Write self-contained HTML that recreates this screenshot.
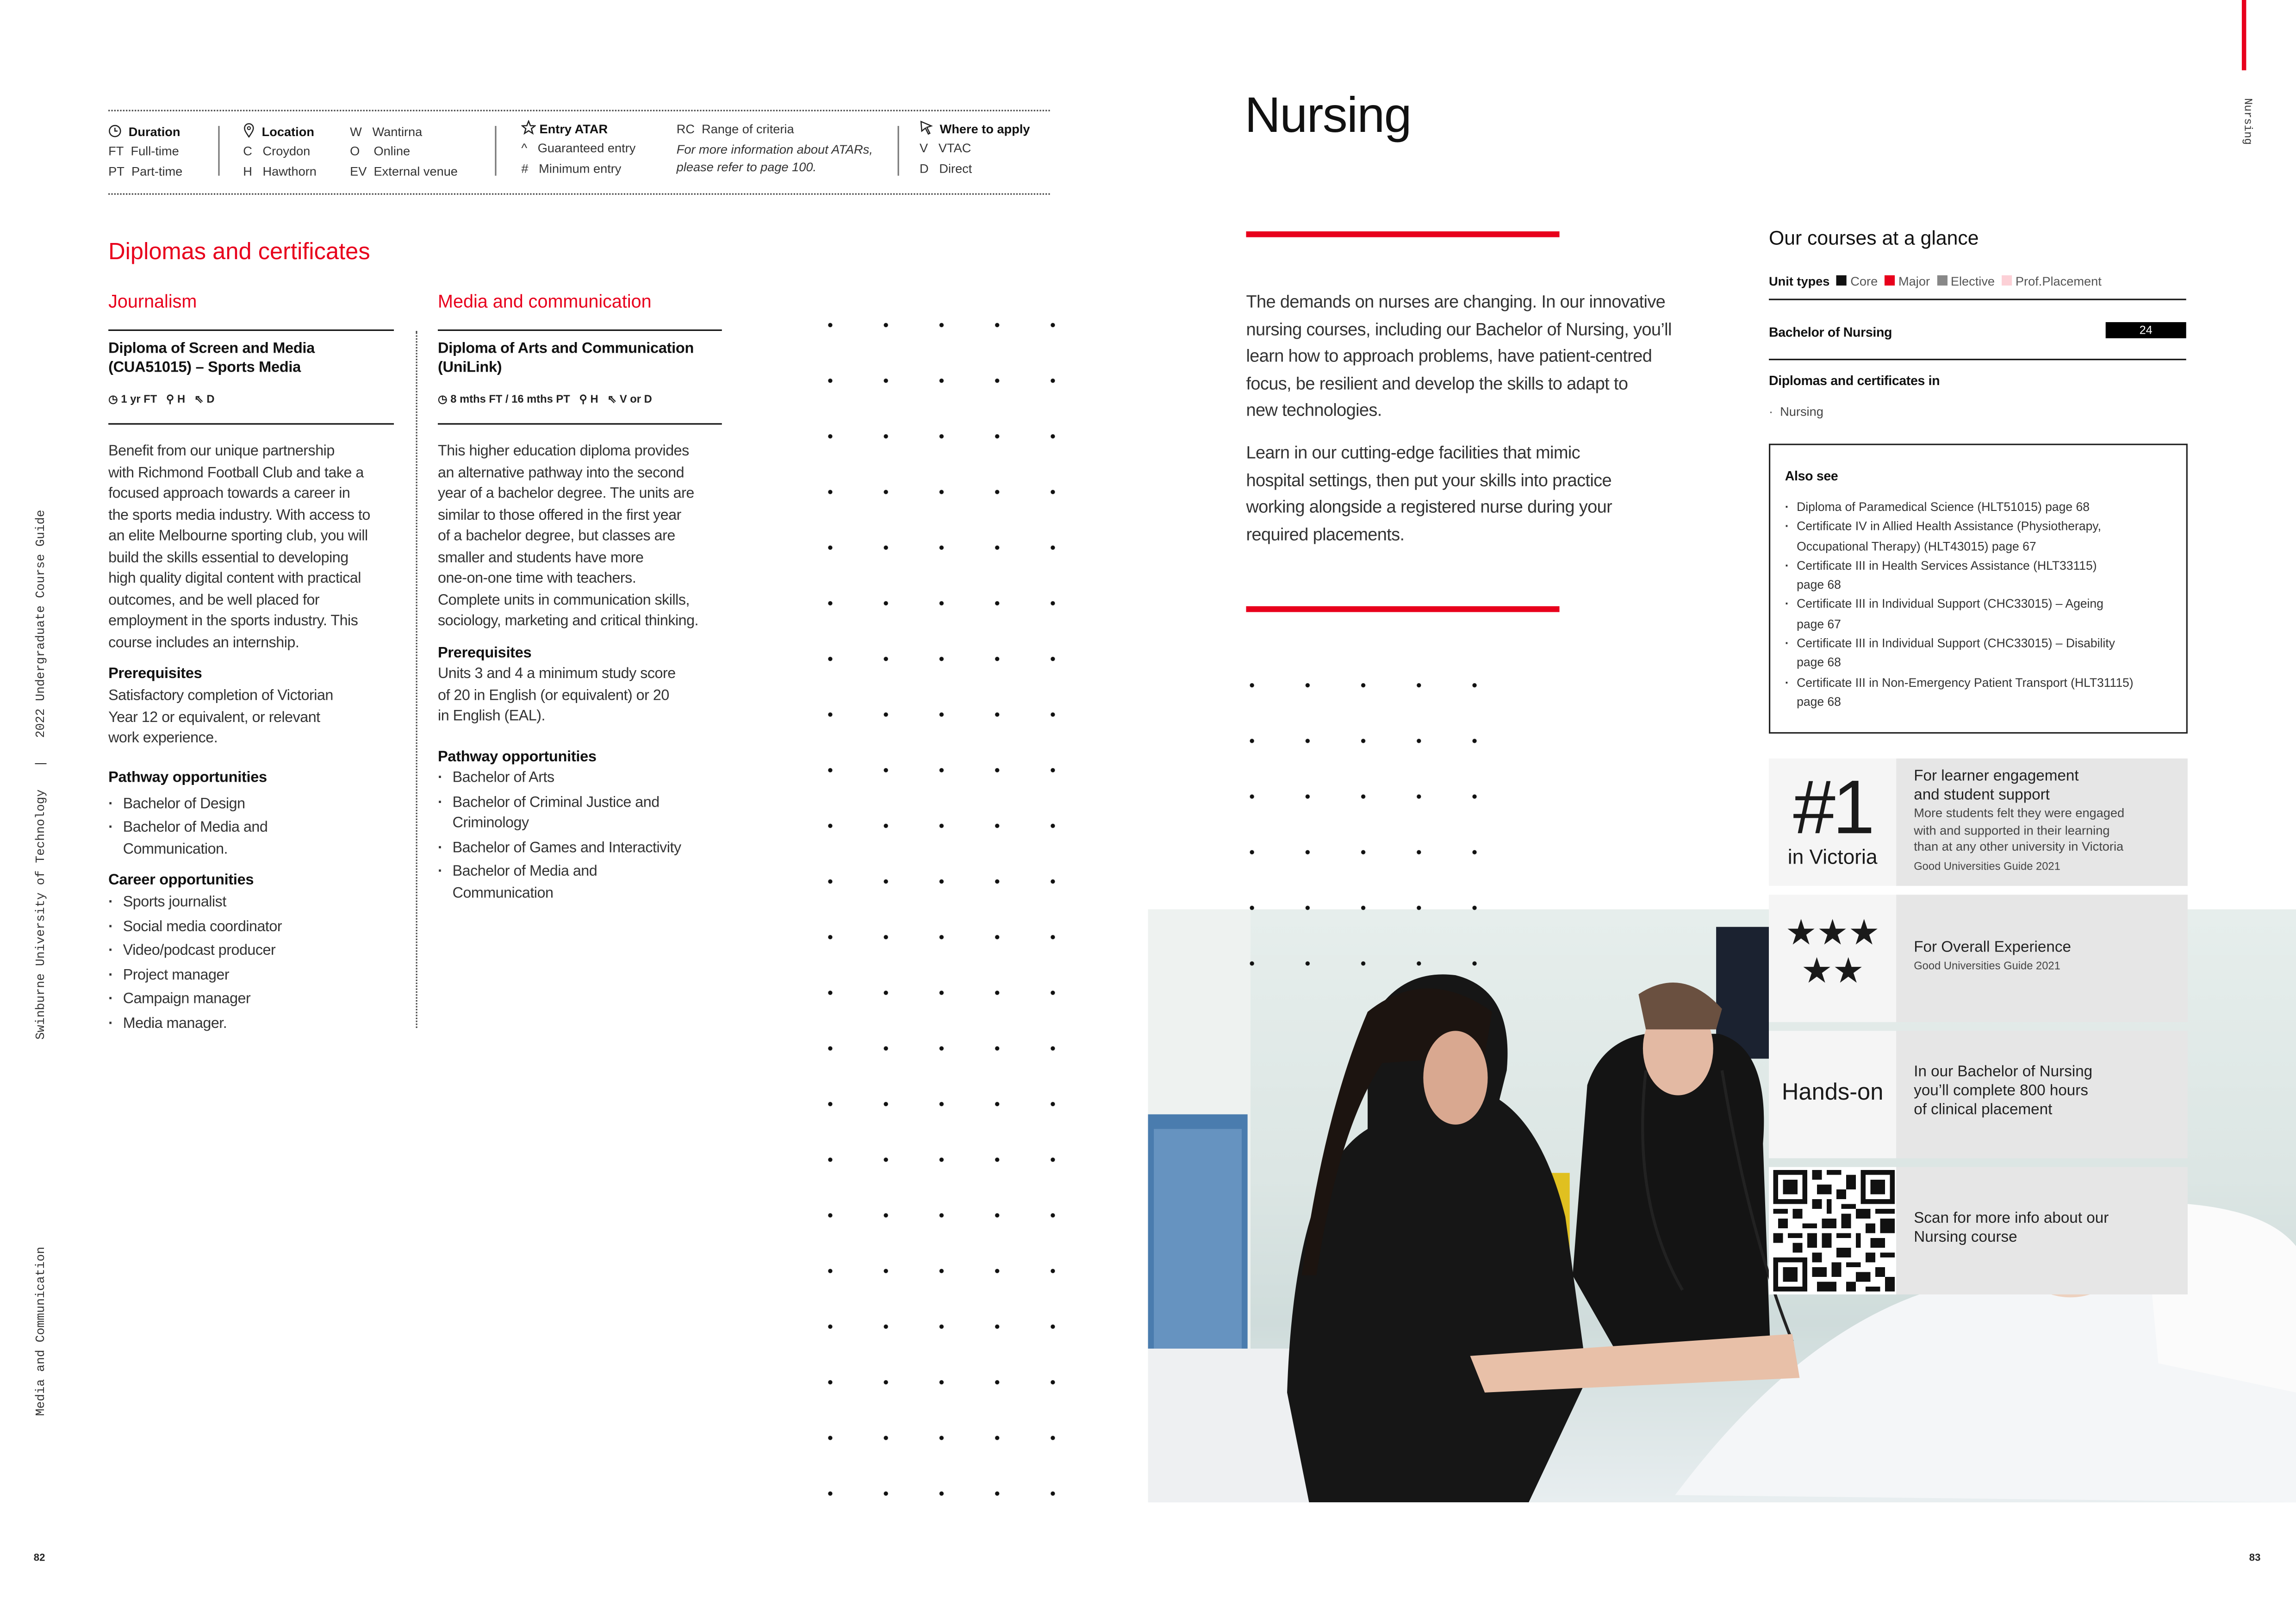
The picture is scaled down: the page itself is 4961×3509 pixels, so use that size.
<!DOCTYPE html>
<html><head><meta charset="utf-8"><style>
html,body{margin:0;padding:0;background:#fff;}
body{width:4961px;height:3508px;overflow:hidden;position:relative;}
#p{position:absolute;left:0;top:0;width:1568px;height:1109px;transform:scale(3.1639);transform-origin:0 0;font-family:"Liberation Sans",sans-serif;color:#222;}
.a{position:absolute;white-space:nowrap;}
.red{color:#e8001c;}
.t{font-size:10.2px;line-height:14.5px;color:#333;letter-spacing:-0.15px;}
.h{font-weight:bold;font-size:10.3px;color:#111;letter-spacing:-0.1px;}
.leg{font-size:8.6px;line-height:13.3px;color:#333;}
.leg b{color:#111;}
ul{margin:0;padding:0;list-style:none;}
li{position:relative;padding-left:10px;}
li:before{content:"·";position:absolute;left:0;font-weight:bold;}
.dl{position:absolute;border-top:1px dotted #444;}
.sl{position:absolute;height:1.3px;background:#111;}
.box{position:absolute;}
</style></head><body><div id="p">

<div class="dl" style="left:74px;top:75px;width:643px"></div>
<div class="dl" style="left:74px;top:132px;width:643px"></div>
<div class="a leg" style="left:74px;top:84px">
<svg width="9" height="9" viewBox="0 0 10 10" style="vertical-align:-1px"><circle cx="5" cy="5" r="4.2" fill="none" stroke="#222" stroke-width="0.9"/><path d="M5 2.5V5H7" fill="none" stroke="#222" stroke-width="0.9"/></svg>&nbsp;&nbsp;<b>Duration</b><br>FT&nbsp;&nbsp;Full-time<br>PT&nbsp;&nbsp;Part-time</div>
<div class="box" style="left:149px;top:86px;width:1px;height:34px;background:#777"></div>
<div class="a leg" style="left:166px;top:84px">
<svg width="8" height="10" viewBox="0 0 8 10" style="vertical-align:-1px"><path d="M4 9.5C2 6.5 1 5 1 3.5A3 3 0 0 1 7 3.5C7 5 6 6.5 4 9.5Z" fill="none" stroke="#222" stroke-width="0.8"/><circle cx="4" cy="3.5" r="1" fill="none" stroke="#222" stroke-width="0.7"/></svg>&nbsp;&nbsp;<b>Location</b><br>C&nbsp;&nbsp;&nbsp;Croydon<br>H&nbsp;&nbsp;&nbsp;Hawthorn</div>
<div class="a leg" style="left:239px;top:84px">W&nbsp;&nbsp;&nbsp;Wantirna<br>O&nbsp;&nbsp;&nbsp;&nbsp;Online<br>EV&nbsp;&nbsp;External venue</div>
<div class="box" style="left:338px;top:86px;width:1px;height:34px;background:#777"></div>
<div class="a leg" style="left:356px;top:82px">
<svg width="10" height="10" viewBox="0 0 10 10" style="vertical-align:-1px"><path d="M5 .7 6.2 3.8 9.4 3.9 6.9 5.9 7.8 9.1 5 7.3 2.2 9.1 3.1 5.9.6 3.9 3.8 3.8Z" fill="none" stroke="#222" stroke-width="0.8"/></svg>&nbsp;<b>Entry ATAR</b><br>^&nbsp;&nbsp;&nbsp;Guaranteed entry<br>#&nbsp;&nbsp;&nbsp;Minimum entry</div>
<div class="a leg" style="left:462px;top:82px;line-height:12px">RC&nbsp;&nbsp;Range of criteria<br><i style="display:inline-block;margin-top:2px">For more information about ATARs,<br>please refer to page 100.</i></div>
<div class="box" style="left:613px;top:86px;width:1px;height:34px;background:#777"></div>
<div class="a leg" style="left:628px;top:82px">
<svg width="9" height="10" viewBox="0 0 9 10" style="vertical-align:-1px"><path d="M1 1 8 4 5 5 7 9 6 9.5 4 5.5 1.5 7.5Z" fill="none" stroke="#222" stroke-width="0.8"/></svg>&nbsp;&nbsp;<b>Where to apply</b><br>V&nbsp;&nbsp;&nbsp;VTAC<br>D&nbsp;&nbsp;&nbsp;Direct</div>

<div class="a red" style="left:74px;top:164px;font-size:16px">Diplomas and certificates</div>
<div class="a red" style="left:74px;top:199px;font-size:12.5px">Journalism</div>
<div class="a red" style="left:299px;top:199px;font-size:12.5px">Media and communication</div>
<div class="sl" style="left:74px;top:225px;width:195px"></div>
<div class="sl" style="left:299px;top:225px;width:194px"></div>
<div class="sl" style="left:74px;top:289px;width:195px"></div>
<div class="sl" style="left:299px;top:289px;width:194px"></div>
<div class="box" style="left:284px;top:226px;height:476px;border-left:1px dotted #444"></div>

<div class="a h" style="left:74px;top:232px;line-height:13px">Diploma of Screen and Media<br>(CUA51015) – Sports Media</div>
<div class="a h" style="left:299px;top:232px;line-height:13px">Diploma of Arts and Communication<br>(UniLink)</div>
<div class="a" style="left:74px;top:268px;font-size:7.5px;font-weight:bold">◷ 1 yr FT &nbsp;&nbsp;⚲ H &nbsp;&nbsp;⇖ D</div>
<div class="a" style="left:299px;top:268px;font-size:7.5px;font-weight:bold">◷ 8 mths FT / 16 mths PT &nbsp;&nbsp;⚲ H &nbsp;&nbsp;⇖ V or D</div>

<div class="a t" style="left:74px;top:302px">Benefit from our unique partnership<br>with Richmond Football Club and take a<br>focused approach towards a career in<br>the sports media industry. With access to<br>an elite Melbourne sporting club, you will<br>build the skills essential to developing<br>high quality digital content with practical<br>outcomes, and be well placed for<br>employment in the sports industry. This<br>course includes an internship.</div>
<div class="a h" style="left:74px;top:455px">Prerequisites</div>
<div class="a t" style="left:74px;top:469px">Satisfactory completion of Victorian<br>Year 12 or equivalent, or relevant<br>work experience.</div>
<div class="a h" style="left:74px;top:526px">Pathway opportunities</div>
<ul class="a t" style="left:74px;top:542px;line-height:15.5px"><li>Bachelor of Design</li><li>Bachelor of Media and<br>Communication.</li></ul>
<div class="a h" style="left:74px;top:596px">Career opportunities</div>
<ul class="a t" style="left:74px;top:609px;line-height:16.5px"><li>Sports journalist</li><li>Social media coordinator</li><li>Video/podcast producer</li><li>Project manager</li><li>Campaign manager</li><li>Media manager.</li></ul>

<div class="a t" style="left:299px;top:302px">This higher education diploma provides<br>an alternative pathway into the second<br>year of a bachelor degree. The units are<br>similar to those offered in the first year<br>of a bachelor degree, but classes are<br>smaller and students have more<br>one-on-one time with teachers.<br>Complete units in communication skills,<br>sociology, marketing and critical thinking.</div>
<div class="a h" style="left:299px;top:441px">Prerequisites</div>
<div class="a t" style="left:299px;top:454px">Units 3 and 4 a minimum study score<br>of 20 in English (or equivalent) or 20<br>in English (EAL).</div>
<div class="a h" style="left:299px;top:512px">Pathway opportunities</div>
<ul class="a t" style="left:299px;top:525px;line-height:14.5px"><li>Bachelor of Arts</li><li style="margin-top:2px">Bachelor of Criminal Justice and<br>Criminology</li><li style="margin-top:2px">Bachelor of Games and Interactivity</li><li style="margin-top:2px">Bachelor of Media and<br>Communication</li></ul>

<div class="box" style="left:548px;top:203px;width:190px;height:836px;background-image:radial-gradient(circle,#111 1.3px,transparent 1.6px);background-size:38px 38px"></div>

<div class="a" style="left:23px;top:710px;transform:rotate(-90deg);transform-origin:0 0;font-family:'Liberation Mono',monospace;font-size:8.4px;color:#333">Swinburne University of Technology &nbsp;&nbsp;| &nbsp;&nbsp;2022 Undergraduate Course Guide</div>
<div class="a" style="left:23px;top:967px;transform:rotate(-90deg);transform-origin:0 0;font-family:'Liberation Mono',monospace;font-size:8.4px;color:#333">Media and Communication</div>
<div class="a" style="left:23px;top:1061px;font-size:7px;font-weight:bold">82</div>
<div class="a" style="left:1536px;top:1061px;font-size:7px;font-weight:bold">83</div>

<div class="box" style="left:1531px;top:0;width:3px;height:48px;background:#e8001c"></div>
<div class="a" style="left:1538px;top:67px;transform:rotate(90deg);transform-origin:0 0;font-family:'Liberation Mono',monospace;font-size:7.6px;color:#333">Nursing</div>
<div class="a" style="left:850px;top:60px;font-size:34px;color:#111;letter-spacing:-0.5px">Nursing</div>
<div class="box" style="left:851px;top:158px;width:214px;height:4px;background:#e8001c"></div>
<div class="box" style="left:851px;top:414px;width:214px;height:4px;background:#e8001c"></div>
<div class="a" style="left:851px;top:197px;font-size:12px;line-height:18.6px;color:#333;letter-spacing:-0.2px">The demands on nurses are changing. In our innovative<br>nursing courses, including our Bachelor of Nursing, you’ll<br>learn how to approach problems, have patient-centred<br>focus, be resilient and develop the skills to adapt to<br>new technologies.</div>
<div class="a" style="left:851px;top:300px;font-size:12px;line-height:18.6px;color:#333;letter-spacing:-0.2px">Learn in our cutting-edge facilities that mimic<br>hospital settings, then put your skills into practice<br>working alongside a registered nurse during your<br>required placements.</div>

<div class="a" style="left:1208px;top:155px;font-size:13.5px;color:#111">Our courses at a glance</div>
<div class="a" style="left:1208px;top:187px;font-size:8.6px;color:#555"><b style="color:#111">Unit types</b> &nbsp;<span style="display:inline-block;width:7px;height:7px;background:#111"></span> Core &nbsp;<span style="display:inline-block;width:7px;height:7px;background:#e8001c"></span> Major &nbsp;<span style="display:inline-block;width:7px;height:7px;background:#888"></span> Elective &nbsp;<span style="display:inline-block;width:7px;height:7px;background:#fcd0d6"></span> Prof.Placement</div>
<div class="sl" style="left:1208px;top:204px;width:285px"></div>
<div class="a h" style="left:1208px;top:222px;font-size:9px">Bachelor of Nursing</div>
<div class="box" style="left:1438px;top:220px;width:55px;height:11px;background:#000;color:#fff;font-size:8px;text-align:center;line-height:11px">24</div>
<div class="sl" style="left:1208px;top:245px;width:285px"></div>
<div class="a h" style="left:1208px;top:255px;font-size:9px">Diplomas and certificates in</div>
<div class="a" style="left:1208px;top:276px;font-size:8.6px;color:#444">·&nbsp; Nursing</div>
<div class="box" style="left:1208px;top:303px;width:284px;height:196px;border:1px solid #222"></div>
<div class="a h" style="left:1219px;top:320px;font-size:9px">Also see</div>
<ul class="a" style="left:1219px;top:340px;font-size:8.4px;line-height:13.3px;color:#333"><li style="padding-left:8px">Diploma of Paramedical Science (HLT51015) page 68</li><li style="padding-left:8px">Certificate IV in Allied Health Assistance (Physiotherapy,<br>Occupational Therapy) (HLT43015) page 67</li><li style="padding-left:8px">Certificate III in Health Services Assistance (HLT33115)<br>page 68</li><li style="padding-left:8px">Certificate III in Individual Support (CHC33015) – Ageing<br>page 67</li><li style="padding-left:8px">Certificate III in Individual Support (CHC33015) – Disability<br>page 68</li><li style="padding-left:8px">Certificate III in Non-Emergency Patient Transport (HLT31115)<br>page 68</li></ul>

<div class="box" style="left:784px;top:621px;width:784px;height:405px;overflow:hidden;background:linear-gradient(180deg,#e6eeec 0%,#dce6e4 45%,#cfdcdb 70%,#e8eef0 100%)">
<svg width="784" height="405" viewBox="0 0 784 405">
<rect x="0" y="0" width="70" height="405" fill="#eef2f0"/>
<rect x="0" y="140" width="68" height="170" fill="#4a7cae"/>
<rect x="4" y="150" width="60" height="150" fill="#7aa4cc" opacity="0.6"/>
<rect x="388" y="12" width="36" height="90" fill="#1b2230"/>
<rect x="248" y="180" width="40" height="60" fill="#e0c020"/>
<rect x="0" y="300" width="200" height="105" fill="#eef0f2"/>
<path d="M150 80 Q170 40 210 45 Q250 55 245 110 L240 130 Q270 150 285 210 L300 320 L260 405 L110 405 L95 330 Q100 180 150 150 Z" fill="#161616"/>
<path d="M150 70 Q190 38 235 70 L230 100 L160 105 Q130 150 115 250 L105 250 Q120 140 150 70Z" fill="#1c1410"/>
<ellipse cx="210" cy="115" rx="22" ry="32" fill="#d9a890"/>
<path d="M300 120 Q310 90 340 85 L390 85 Q425 95 420 160 L425 300 L330 320 L290 250 Z" fill="#141414"/>
<ellipse cx="362" cy="95" rx="24" ry="32" fill="#e3b9a3"/>
<path d="M335 58 Q365 38 392 68 L388 82 L340 82 Z" fill="#6a5040"/>
<path d="M340 110 Q330 200 365 260 M392 110 Q410 220 440 295" fill="none" stroke="#222" stroke-width="2"/>
<path d="M360 400 Q480 240 620 250 L784 270 L784 405 Z" fill="#f4f6f8"/>
<path d="M220 305 L440 290 L445 320 L230 330 Z" fill="#e8c0a8"/>
<ellipse cx="630" cy="230" rx="40" ry="35" fill="#edd1bf"/>
<path d="M680 200 Q760 200 784 230 L784 330 L690 310 Z" fill="#fbfbfb"/>
</svg></div>
<div class="box" style="left:836px;top:449px;width:190px;height:228px;background-image:radial-gradient(circle,#111 1.3px,transparent 1.6px);background-size:38px 38px"></div>

<div class="box" style="left:1208px;top:518px;width:87px;height:87px;background:#f5f5f5"></div>
<div class="box" style="left:1295px;top:518px;width:199px;height:87px;background:#e6e6e6"></div>
<div class="a" style="left:1208px;top:526px;width:87px;text-align:center;font-size:52px;line-height:52px;color:#1a1a1a;letter-spacing:-2px">#1</div>
<div class="a" style="left:1208px;top:577px;width:87px;text-align:center;font-size:14px;color:#1a1a1a">in Victoria</div>
<div class="a" style="left:1307px;top:524px;font-size:10.5px;line-height:13px;color:#222">For learner engagement<br>and student support</div>
<div class="a" style="left:1307px;top:550px;font-size:8.6px;line-height:11.7px;color:#444">More students felt they were engaged<br>with and supported in their learning<br>than at any other university in Victoria</div>
<div class="a" style="left:1307px;top:587px;font-size:7.5px;color:#444">Good Universities Guide 2021</div>

<div class="box" style="left:1208px;top:611px;width:87px;height:87px;background:#f5f5f5"></div>
<div class="box" style="left:1295px;top:611px;width:199px;height:87px;background:#e6e6e6"></div>
<div class="a" style="left:1208px;top:625px;width:87px;text-align:center;font-size:24px;line-height:26px;color:#1a1a1a">★★★<br>★★</div>
<div class="a" style="left:1307px;top:641px;font-size:10.5px;color:#222">For Overall Experience</div>
<div class="a" style="left:1307px;top:655px;font-size:7.5px;color:#444">Good Universities Guide 2021</div>

<div class="box" style="left:1208px;top:704px;width:87px;height:87px;background:#f5f5f5"></div>
<div class="box" style="left:1295px;top:704px;width:199px;height:87px;background:#e6e6e6"></div>
<div class="a" style="left:1208px;top:738px;width:87px;text-align:center;font-size:16px;color:#1a1a1a">Hands-on</div>
<div class="a" style="left:1307px;top:726px;font-size:10.5px;line-height:13px;color:#222">In our Bachelor of Nursing<br>you’ll complete 800 hours<br>of clinical placement</div>

<div class="box" style="left:1208px;top:797px;width:87px;height:87px;background:#fff"></div>
<div class="box" style="left:1295px;top:797px;width:199px;height:87px;background:#e6e6e6"></div>
<svg class="box" style="left:1211px;top:799px" width="83" height="83" viewBox="0 0 25 25" shape-rendering="crispEdges">
<g fill="#111"><path d="M0 0h7v7H0zM18 0h7v7h-7zM0 18h7v7H0z"/></g>
<g fill="#fff"><path d="M1 1h5v5H1zM19 1h5v5h-5zM1 19h5v5H1z"/></g>
<g fill="#111"><path d="M2 2h3v3H2zM20 2h3v3h-3zM2 20h3v3H2z"/>
<path d="M8 0h2v2H8zM11 0h3v1h-3zM15 1h2v3h-2zM9 3h3v2H9zM13 4h2v2h-2zM8 6h2v2H8zM11 6h1v3h-1zM14 7h3v1h-3z"/>
<path d="M0 8h3v1H0zM4 8h2v2H4zM1 10h2v2H1zM6 11h3v1H6zM0 13h2v2H0zM3 13h3v1H3zM7 13h2v3H7zM10 10h3v2h-3zM14 9h2v3h-2zM17 8h3v2h-3zM21 8h4v1h-4zM19 11h2v2h-2zM22 10h3v3h-3z"/>
<path d="M4 15h2v2H4zM10 13h2v3h-2zM13 13h3v1h-3zM17 13h1v3h-1zM20 14h3v2h-3zM13 16h3v2h-3zM19 17h2v2h-2zM22 17h3v1h-3zM8 17h2v2H8zM8 20h3v2H8zM12 19h2v3h-2zM15 19h3v1h-3zM17 21h3v2h-3zM21 20h2v2h-2zM23 22h2v3h-2zM9 23h4v2H9zM15 23h2v2h-2zM19 24h3v1h-3z"/></g>
</svg>
<div class="a" style="left:1307px;top:826px;font-size:10.5px;line-height:13px;color:#222">Scan for more info about our<br>Nursing course</div>

</div></body></html>
